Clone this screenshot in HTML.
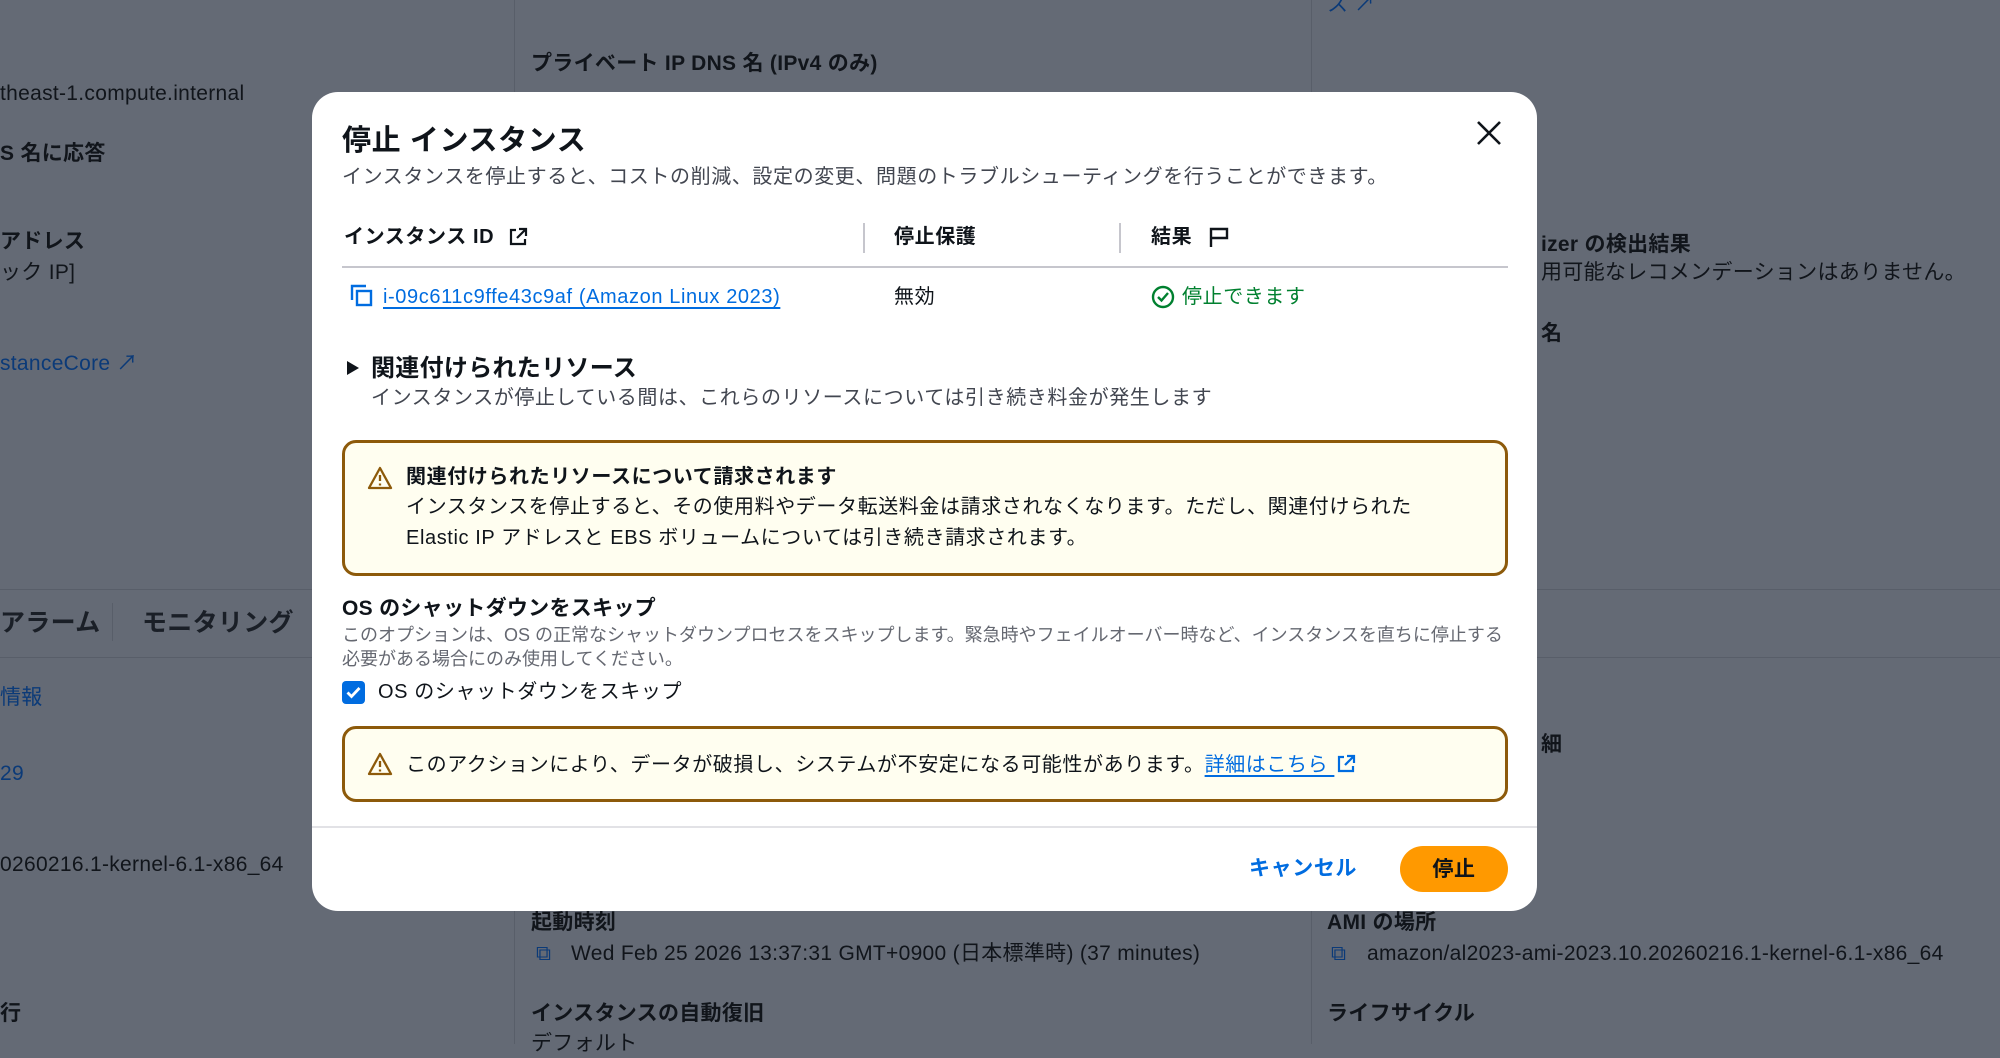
<!DOCTYPE html>
<html><head><meta charset="utf-8">
<style>
*{margin:0;padding:0;box-sizing:border-box}
body{width:2000px;height:1044px;overflow:hidden;background:#646a75;font-family:"Liberation Sans","Noto Sans CJK JP",sans-serif;color:#0f141a;position:relative}
.a{position:absolute;white-space:nowrap}
.bg{color:#11151b;font-size:21px;line-height:28px;letter-spacing:0.3px}
.bgb{font-weight:bold}
.bgl{color:#0b3a78}
.vl{position:absolute;width:1px;background:#585e69;top:0;height:1044px}
.hl{position:absolute;height:1px;background:#585e69;left:0;width:2000px}
.modal{position:absolute;left:312px;top:92px;width:1225px;height:819px;background:#fff;border-radius:26px}
.m{position:absolute;white-space:nowrap;font-size:20px;line-height:28px;letter-spacing:0.6px}
.b{font-weight:bold}
.alert{position:absolute;left:30px;width:1166px;border:3px solid #8d5a0a;border-radius:14px;background:#fffef0}
</style></head><body>
<div class="vl" style="left:514px"></div>
<div class="vl" style="left:1311px"></div>
<div class="hl" style="top:589px"></div>
<div class="hl" style="top:657px"></div>
<div class="a bg" style="left:0;top:80px">theast-1.compute.internal</div>
<div class="a bg bgb" style="left:0;top:140px">S 名に応答</div>
<div class="a bg bgb" style="left:0;top:228px">アドレス</div>
<div class="a bg" style="left:0;top:259px">ック IP]</div>
<div class="a bg bgl" style="left:0;top:350px">stanceCore ↗</div>
<div class="a bg bgb" style="left:0;top:607px;font-size:25px;line-height:32px;color:#1a1f27">アラーム</div>
<div class="vl" style="left:112px;top:603px;height:38px"></div>
<div class="a bg bgb" style="left:142px;top:607px;font-size:25px;line-height:32px;color:#1a1f27">モニタリング</div>
<div class="a bg bgl" style="left:0;top:684px">情報</div>
<div class="a bg bgl" style="left:0;top:760px">29</div>
<div class="a bg" style="left:0;top:851px">0260216.1-kernel-6.1-x86_64</div>
<div class="a bg bgb" style="left:0;top:1000px">行</div>
<div class="a bg bgb" style="left:531px;top:50px">プライベート IP DNS 名 (IPv4 のみ)</div>
<div class="a bg bgb" style="left:531px;top:909px">起動時刻</div>
<div class="a bg" style="left:536px;top:940px;color:#0b3a78">⧉</div>
<div class="a bg" style="left:571px;top:940px">Wed Feb 25 2026 13:37:31 GMT+0900 (日本標準時) (37 minutes)</div>
<div class="a bg bgb" style="left:531px;top:1000px">インスタンスの自動復旧</div>
<div class="a bg" style="left:531px;top:1030px">デフォルト</div>
<div class="a bg bgl" style="left:1327px;top:-9px">ス ↗</div>
<div class="a bg bgb" style="left:1541px;top:231px">izer の検出結果</div>
<div class="a bg" style="left:1541px;top:259px">用可能なレコメンデーションはありません。</div>
<div class="a bg bgb" style="left:1541px;top:320px">名</div>
<div class="a bg bgb" style="left:1541px;top:731px">細</div>
<div class="a bg bgb" style="left:1327px;top:909px">AMI の場所</div>
<div class="a bg" style="left:1331px;top:940px;color:#0b3a78">⧉</div>
<div class="a bg" style="left:1367px;top:940px">amazon/al2023-ami-2023.10.20260216.1-kernel-6.1-x86_64</div>
<div class="a bg bgb" style="left:1327px;top:1000px">ライフサイクル</div>

<div class="modal">
  <div class="m b" style="left:30px;top:29px;font-size:29px;line-height:40px">停止 インスタンス</div>
  <svg class="a" style="left:1164px;top:28px" width="26" height="26" viewBox="0 0 26 26"><path d="M2 2L24 24M24 2L2 24" stroke="#0f141a" stroke-width="2.6"/></svg>
  <div class="m" style="left:30px;top:71px;color:#424650">インスタンスを停止すると、コストの削減、設定の変更、問題のトラブルシューティングを行うことができます。</div>

  <div class="m b" style="left:32px;top:131px">インスタンス ID</div>
  <svg class="a" style="left:196px;top:135px" width="20" height="20" viewBox="0 0 20 20" fill="none" stroke="#0f141a" stroke-width="2.2"><path d="M8 3H3v14h14v-5M11 2h7v7M18 2L9 11"/></svg>
  <div class="a" style="left:551px;top:131px;width:2px;height:30px;background:#c6c6cd"></div>
  <div class="m b" style="left:582px;top:131px">停止保護</div>
  <div class="a" style="left:807px;top:131px;width:2px;height:30px;background:#c6c6cd"></div>
  <div class="m b" style="left:839px;top:131px">結果</div>
  <svg class="a" style="left:895px;top:133px" width="24" height="24" viewBox="0 0 24 24" fill="none" stroke="#0f141a" stroke-width="2.4"><path d="M4 22V4h16v9H4"/></svg>
  <div class="a" style="left:30px;top:174px;width:1166px;height:2px;background:#c6c6cd"></div>

  <svg class="a" style="left:38px;top:192px" width="24" height="24" viewBox="0 0 24 24" fill="none" stroke="#006ce0" stroke-width="2.4"><path d="M2 16V2h14"/><rect x="7" y="7" width="14" height="14"/></svg>
  <div class="m" style="left:71px;top:191px;color:#006ce0;text-decoration:underline;text-underline-offset:4px;letter-spacing:0.6px">i-09c611c9ffe43c9af (Amazon Linux 2023)</div>
  <div class="m" style="left:582px;top:191px">無効</div>
  <svg class="a" style="left:839px;top:193px" width="24" height="24" viewBox="0 0 24 24" fill="none" stroke="#00802f" stroke-width="2.4"><circle cx="12" cy="12" r="10"/><path d="M7 12l3.5 3.5L17 8"/></svg>
  <div class="m" style="left:870px;top:191px;color:#00802f">停止できます</div>

  <svg class="a" style="left:34px;top:268px" width="14" height="16" viewBox="0 0 14 16"><path d="M1 1L13 8L1 15Z" fill="#0f141a"/></svg>
  <div class="m b" style="left:59px;top:260px;font-size:24px;line-height:34px;letter-spacing:0.3px">関連付けられたリソース</div>
  <div class="m" style="left:59px;top:292px;color:#424650">インスタンスが停止している間は、これらのリソースについては引き続き料金が発生します</div>

  <div class="alert" style="top:348px;height:136px">
    <svg class="a" style="left:22px;top:23px" width="26" height="24" viewBox="0 0 26 24" fill="none" stroke="#8d5a0a" stroke-width="2.3"><path d="M13 2L24 22H2Z" stroke-linejoin="round"/><path d="M13 9v6M13 17.5v2"/></svg>
    <div class="m b" style="left:61px;top:20px">関連付けられたリソースについて請求されます</div>
    <div class="m" style="left:61px;top:49px;line-height:31px">インスタンスを停止すると、その使用料やデータ転送料金は請求されなくなります。ただし、関連付けられた<br>Elastic IP アドレスと EBS ボリュームについては引き続き請求されます。</div>
  </div>

  <div class="m b" style="left:30px;top:503px;font-size:21px;letter-spacing:0.3px">OS のシャットダウンをスキップ</div>
  <div class="m" style="left:30px;top:531px;font-size:18px;line-height:24px;color:#656871;letter-spacing:0">このオプションは、OS の正常なシャットダウンプロセスをスキップします。緊急時やフェイルオーバー時など、インスタンスを直ちに停止する<br>必要がある場合にのみ使用してください。</div>
  <div class="a" style="left:30px;top:589px;width:23px;height:23px;background:#006ce0;border-radius:4px"></div>
  <svg class="a" style="left:30px;top:589px" width="23" height="23" viewBox="0 0 23 23" fill="none" stroke="#fff" stroke-width="2.8"><path d="M5.5 11.5l4 4 8-8.5"/></svg>
  <div class="m" style="left:66px;top:586px">OS のシャットダウンをスキップ</div>

  <div class="alert" style="top:634px;height:76px">
    <svg class="a" style="left:22px;top:23px" width="26" height="24" viewBox="0 0 26 24" fill="none" stroke="#8d5a0a" stroke-width="2.3"><path d="M13 2L24 22H2Z" stroke-linejoin="round"/><path d="M13 9v6M13 17.5v2"/></svg>
    <div class="m" style="left:61px;top:22px">このアクションにより、データが破損し、システムが不安定になる可能性があります。<span style="color:#006ce0;text-decoration:underline;text-underline-offset:4px">詳細はこちら&nbsp;</span><svg width="20" height="20" viewBox="0 0 20 20" fill="none" stroke="#006ce0" stroke-width="2.2" style="vertical-align:-3px;margin-left:2px"><path d="M8 3H3v14h14v-5M11 2h7v7M18 2L9 11"/></svg></div>
  </div>

  <div class="a" style="left:0;top:734px;width:1225px;height:2px;background:#e2e2e6"></div>
  <div class="m b" style="left:937px;top:763px;color:#006ce0;font-size:21px">キャンセル</div>
  <div class="a" style="left:1088px;top:754px;width:108px;height:46px;border-radius:23px;background:#ff9900"></div>
  <div class="m b" style="left:1088px;top:764px;width:108px;text-align:center;font-size:21px">停止</div>
</div>
</body></html>
